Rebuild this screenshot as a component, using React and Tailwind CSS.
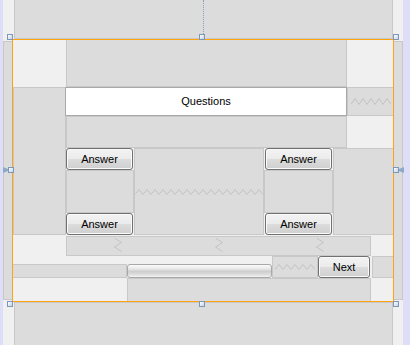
import React from "react";

const box = "bg-[#dcdcdc] border border-[#c8c8c8]";
const button =
  "flex items-center justify-center rounded-[3px] border border-[#707070] bg-[linear-gradient(to_bottom,#f3f3f3,#ebebeb_48%,#dcdcdc_52%,#cfcfcf)] shadow-[inset_0_0_0_1px_#fafafa] text-[11px] text-black";

const HZig = ({ width, height = 6, period = 8 }) => {
  const pts = [];
  for (let x = 0, i = 0; x <= width; x += period / 2, i++) {
    pts.push(`${x},${i % 2 ? 0.5 : height - 0.5}`);
  }
  return (
    <svg width={width} height={height} className="block">
      <polyline points={pts.join(" ")} fill="none" stroke="#c2c2c2" strokeWidth="1" />
    </svg>
  );
};

const VZig = ({ height, width = 8, period = 9 }) => {
  const pts = [];
  for (let y = 0, i = 0; y <= height; y += period / 2, i++) {
    pts.push(`${i % 2 ? width - 0.5 : 0.5},${y}`);
  }
  return (
    <svg width={width} height={height} className="block">
      <polyline points={pts.join(" ")} fill="none" stroke="#c2c2c2" strokeWidth="1" />
    </svg>
  );
};

const Handle = ({ className }) => (
  <div
    className={
      "absolute w-[6px] h-[6px] border border-[#7d97b9] bg-[linear-gradient(135deg,#ffffff,#c3d3e8)] " +
      className
    }
  />
);

export default function App() {
  return (
    <div className="relative w-[410px] h-[345px] overflow-hidden bg-[#f0f0f0] flex font-['Liberation_Sans',Arial,sans-serif]">
      <div className="w-[3px] bg-[#dedef8]" />

      <div className="w-[400px] flex flex-col">
        <div className="h-[39px] ml-[11px] w-[379px] bg-[#dcdcdc] border-x border-b border-[#c8c8c8]" />

        <div className="h-[263px] flex items-center">
          <div className="w-[9px] h-[259px] bg-[#dcdcdc] border border-r-0 border-[#c8c8c8]" />

          <div className="w-[382px] h-[263px] border border-[#ffa30f] grid grid-cols-[53px_61px_7px_130px_8px_46px_15px_14px_24px_22px] grid-rows-[47px_29px_32px_22px_43px_22px_21px_8px_14px_23px]">
            <div className={"col-start-2 col-end-9 row-start-1 row-end-2 border-t-0 " + box} />

            <div className={"col-start-1 col-end-2 row-start-2 row-end-7 " + box} />

            <div className="col-start-2 col-end-9 row-start-2 row-end-3 ml-[-1px] bg-white border border-[#a9a9a9] flex items-center justify-center text-[11px] text-black">
              Questions
            </div>

            <div className={"col-start-9 col-end-11 row-start-2 row-end-3 border-r-0 flex items-center justify-center " + box}>
              <HZig width={40} height={7} />
            </div>

            <div className={"col-start-2 col-end-9 row-start-3 row-end-4 " + box} />

            <div className={"col-start-2 col-end-4 row-start-4 row-end-5 mr-px " + button}>Answer</div>
            <div className={"col-start-2 col-end-4 row-start-5 row-end-6 " + box} />
            <div className={"col-start-2 col-end-4 row-start-6 row-end-7 mr-px " + button}>Answer</div>

            <div className={"col-start-4 col-end-5 row-start-4 row-end-7 flex items-center overflow-hidden " + box}>
              <HZig width={128} height={6} />
            </div>

            <div className={"col-start-5 col-end-8 row-start-4 row-end-5 ml-px mr-px " + button}>Answer</div>
            <div className={"col-start-5 col-end-8 row-start-5 row-end-6 " + box} />
            <div className={"col-start-5 col-end-8 row-start-6 row-end-7 ml-px mr-px " + button}>Answer</div>

            <div className={"col-start-8 col-end-11 row-start-4 row-end-7 border-r-0 " + box} />

            <div className={"col-start-2 col-end-10 row-start-7 row-end-8 mt-px flex items-center justify-around " + box}>
              <VZig height={17} />
              <VZig height={17} />
              <VZig height={17} />
            </div>

            <div className={"col-start-1 col-end-3 row-start-9 row-end-10 border-l-0 " + box} />

            <div className="col-start-3 col-end-6 row-start-9 row-end-10 rounded-[3px] border border-[#a8a8a8] bg-[linear-gradient(to_bottom,#fbfbfb,#e9e9e9_30%,#cdcdcd_55%,#dedede_80%,#f3f3f3)]" />

            <div className={"col-start-6 col-end-7 row-start-8 row-end-10 flex items-center justify-center " + box}>
              <HZig width={40} height={6} />
            </div>

            <div className={"col-start-7 col-end-10 row-start-8 row-end-10 mr-px " + button}>Next</div>

            <div className={"col-start-10 col-end-11 row-start-8 row-end-10 ml-px border-r-0 " + box} />

            <div className={"col-start-3 col-end-10 row-start-10 row-end-11 border-b-0 " + box} />
          </div>

          <div className="w-[9px] h-[259px] bg-[#dcdcdc] border border-l-0 border-[#c8c8c8]" />
        </div>

        <div className="flex-1 ml-[11px] w-[379px] bg-[#dcdcdc] border-x border-t border-[#c8c8c8]" />
      </div>

      <div className="flex-1 bg-[#dedef8]" />

      <div className="absolute left-[203px] top-0 h-[34px] border-l border-dotted border-[#8da0b8]" />

      <Handle className="left-[7px] top-[34px]" />
      <Handle className="left-[199px] top-[34px]" />
      <Handle className="left-[393px] top-[34px]" />

      <svg className="absolute left-[3px] top-[167px]" width="6" height="6">
        <polygon points="0,0 5,2 5,4 0,6" fill="#8ea8c8" />
      </svg>
      <Handle className="left-[8px] top-[167px]" />
      <Handle className="left-[393px] top-[167px]" />
      <svg className="absolute left-[398px] top-[167px]" width="6" height="6">
        <polygon points="6,0 1,2 1,4 6,6" fill="#8ea8c8" />
      </svg>

      <Handle className="left-[7px] top-[301px]" />
      <Handle className="left-[199px] top-[301px]" />
      <Handle className="left-[393px] top-[301px]" />
    </div>
  );
}
